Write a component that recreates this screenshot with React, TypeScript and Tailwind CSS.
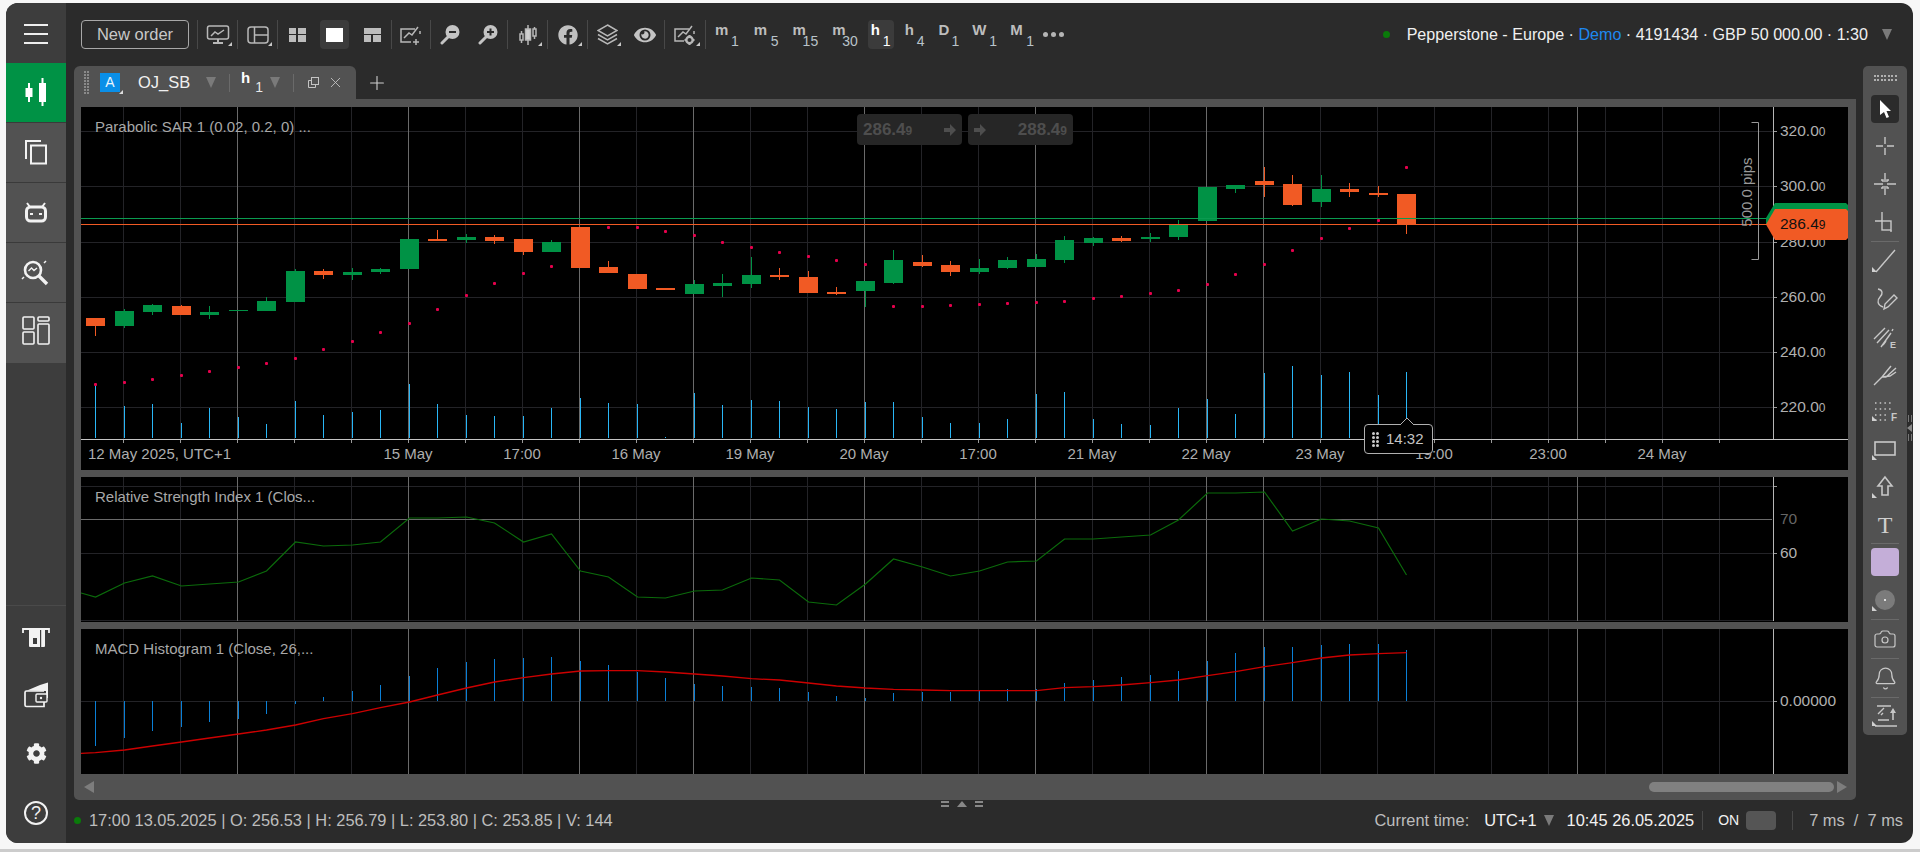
import { useMemo } from 'react'
import { Plus, X, Camera, Bell } from 'lucide-react'
import { FaCog, FaEye, FaFacebook } from 'react-icons/fa'

// candle data: [body top, body bottom, wick high, wick low, up?]
const candles: [number, number, number, number, number][] = [
  [318, 326, 318, 336, 0], [311, 326, 309, 328, 1], [305, 312, 304, 315, 1], [306, 315, 305, 315, 0],
  [312, 315, 306, 319, 1], [310, 311, 310, 311, 1], [301, 311, 297, 311, 1], [271, 302, 269, 302, 1],
  [271, 275, 269, 279, 0], [272, 275, 268, 280, 1], [269, 272, 268, 274, 1], [239, 269, 239, 269, 1],
  [239, 241, 230, 241, 0], [237, 240, 234, 243, 1], [237, 241, 235, 244, 0], [239, 252, 239, 255, 0],
  [242, 252, 240, 252, 1], [227, 268, 227, 268, 0], [267, 273, 261, 273, 0], [274, 289, 274, 289, 0],
  [288, 290, 288, 290, 0], [284, 294, 280, 294, 1], [283, 286, 274, 297, 1], [275, 284, 257, 288, 1],
  [275, 277, 268, 280, 0], [277, 293, 271, 293, 0], [292, 294, 287, 295, 0], [281, 291, 281, 307, 1],
  [260, 283, 250, 284, 1], [262, 266, 255, 267, 0], [265, 272, 261, 276, 0], [268, 272, 259, 274, 1],
  [260, 268, 257, 269, 1], [259, 267, 254, 267, 1], [240, 260, 236, 263, 1], [238, 243, 237, 246, 1],
  [238, 241, 236, 242, 0], [237, 239, 233, 242, 1], [225, 237, 220, 240, 1], [187, 221, 187, 221, 1],
  [185, 189, 185, 193, 1], [181, 185, 167, 197, 0], [184, 205, 175, 206, 0], [189, 202, 175, 207, 1],
  [189, 192, 183, 197, 0], [193, 195, 186, 197, 0], [194, 224, 194, 234, 0],
]
const sar = [384, 382, 379, 375, 371, 367, 363, 358, 349, 341, 332, 323, 309, 295, 283, 273, 266, 230, 227, 227, 231, 235, 242, 247, 252, 256, 260, 264, 306, 306, 305, 304, 303, 302, 301, 298, 296, 293, 290, 284, 274, 264, 250, 238, 228, 220, 167]
const volume = [384, 406, 404, 423, 408, 417, 424, 401, 415, 412, 410, 384, 404, 415, 416, 416, 408, 398, 403, 404, 437, 393, 405, 400, 401, 407, 409, 402, 402, 417, 423, 423, 419, 394, 392, 419, 424, 425, 408, 399, 414, 373, 366, 375, 372, 395, 372]
const rsi = [597, 583, 576, 586, 584, 582, 571, 542, 546, 545, 542, 518, 518, 517, 523, 542, 534, 571, 577, 597, 598, 591, 590, 578, 580, 602, 605, 584, 559, 567, 576, 571, 562, 561, 539, 539, 537, 535, 520, 493, 493, 492, 531, 519, 521, 528, 575]
const hist = [746, 738, 731, 727, 722, 719, 714, 704, 697, 691, 685, 676, 668, 662, 659, 658, 657, 661, 665, 672, 678, 684, 686, 687, 688, 692, 696, 698, 693, 692, 692, 691, 689, 689, 683, 680, 677, 675, 671, 661, 653, 647, 647, 645, 644, 644, 650]
const macd = [752.7, 750, 746, 742, 738, 734, 730, 725, 718.7, 713.7, 707.7, 702, 695, 688, 682, 677.7, 674, 671, 670.7, 670.7, 672, 674, 676, 678.7, 680, 683, 686, 688, 689.3, 690, 690.7, 690.7, 690.7, 690.7, 687.7, 686.7, 685, 682.7, 680, 675.7, 671.7, 666.7, 662.7, 658, 655, 653.7, 652.7]

const cx = (i: number) => Math.round(95.3 + 28.5 * i)
const gridX = Array.from({ length: 29 }, (_, i) => 123 + 57 * i)
const bright = [237, 408, 579, 693, 864, 1035, 1206, 1263, 1577]
const timeLabels: [string, number][] = [['15 May', 408], ['17:00', 522], ['16 May', 636], ['19 May', 750], ['20 May', 864], ['17:00', 978], ['21 May', 1092], ['22 May', 1206], ['23 May', 1320], ['19:00', 1434], ['23:00', 1548], ['24 May', 1662]]
const prices: [string, number][] = [['320.0', 131], ['300.0', 186], ['280.0', 242], ['260.0', 297], ['240.0', 352], ['220.0', 407]]

const GREEN = '#009245'
const ORANGE = '#f15a24'

function VGrid({ top, bottom }: { top: number; bottom: number }) {
  return (
    <>
      {gridX.map((x) => (
        <rect key={x} x={x} y={top} width={1} height={bottom - top} fill="#232327" />
      ))}
      {bright.map((x) => (
        <rect key={x} x={x} y={top} width={1} height={bottom - top} fill="#6a6a6a" />
      ))}
      <rect x={1773} y={top} width={1} height={bottom - top} fill="#b5b5b5" />
    </>
  )
}

function PricePane() {
  return (
    <svg width={1767} height={363} viewBox="81 107 1767 363" className="block">
      <rect x={81} y={107} width={1767} height={363} fill="#000" />
      {[131, 186, 242, 297, 352, 407].map((y) => (
        <rect key={y} x={81} y={y} width={1692} height={1} fill="#232327" />
      ))}
      <VGrid top={107} bottom={439} />
      <rect x={81} y={439} width={1767} height={1} fill="#c4c4c4" />
      {gridX.map((x) => (
        <rect key={x} x={x} y={440} width={1} height={3} fill="#999" />
      ))}
      {volume.map((y, i) => (
        <rect key={i} x={cx(i)} y={y} width={1} height={438 - y} fill="#29b6f6" />
      ))}
      {sar.map((y, i) => (
        <rect key={i} x={cx(i) - 1} y={y - 1} width={3} height={3} rx={1} fill="#e6004c" />
      ))}
      {candles.map(([t, b, h, l, up], i) => (
        <g key={i} fill={up ? GREEN : ORANGE}>
          <rect x={cx(i)} y={h} width={1} height={l - h} />
          <rect x={cx(i) - 9} y={t} width={19} height={b - t} />
        </g>
      ))}
      <rect x={81} y={218} width={1686} height={1} fill="#0a9b50" />
      <rect x={81} y={224} width={1686} height={1} fill="#f15a24" />
      <g stroke="#999" fill="none">
        <path d="M1751.5 122.5H1758.5V259.5H1751.5" />
      </g>
      <text x={1746} y={192} textAnchor="middle" dominantBaseline="central" transform="rotate(-90 1746 192)" fontSize={15} fill="#9a9a9a">
        500.0 pips
      </text>
      {prices.map(([p, y]) => (
        <g key={y}>
          <rect x={1774} y={y} width={3} height={1} fill="#999" />
          <text x={1780} y={y + 4.5} fontSize={15.5} fill="#b0b0b0">
            {p}
            <tspan fontSize={12}>0</tspan>
          </text>
        </g>
      ))}
      <polygon points="1766,218 1775,203 1846,203 1848,205 1848,224 1766,224" fill={GREEN} />
      <polygon points="1766,224.5 1775,209 1846,209 1848,211 1848,238 1846,240 1775,240" fill={ORANGE} />
      <text x={1780} y={228.5} fontSize={15.5} fill="#111">
        286.4<tspan fontSize={12}>9</tspan>
      </text>
      <text x={88} y={459} fontSize={15} fill="#aeaeae">
        12 May 2025, UTC+1
      </text>
      {timeLabels.map(([t, x]) => (
        <text key={x} x={x} y={459} fontSize={15} textAnchor="middle" fill="#aeaeae">
          {t}
        </text>
      ))}
    </svg>
  )
}

function RsiPane() {
  const line = useMemo(() => '81,593 ' + rsi.map((y, i) => `${cx(i) + 0.5},${y}`).join(' '), [])
  return (
    <svg width={1767} height={145} viewBox="81 477 1767 145" className="block">
      <rect x={81} y={477} width={1767} height={145} fill="#000" />
      {[486, 553, 620].map((y) => (
        <rect key={y} x={81} y={y} width={1692} height={1} fill="#232327" />
      ))}
      <VGrid top={477} bottom={621} />
      <rect x={81} y={519} width={1691} height={1} fill="#6a6a6a" />
      <polyline points={line} fill="none" stroke="#0b6b0b" strokeWidth={1.2} />
      {[486, 553].map((y) => (
        <rect key={y} x={1774} y={y} width={3} height={1} fill="#999" />
      ))}
      <text x={1780} y={524} fontSize={15.5} fill="#666">
        70
      </text>
      <text x={1780} y={557.5} fontSize={15.5} fill="#b0b0b0">
        60
      </text>
    </svg>
  )
}

function MacdPane() {
  const line = useMemo(() => '81,753.3 ' + macd.map((y, i) => `${cx(i) + 0.5},${y}`).join(' '), [])
  return (
    <svg width={1767} height={145} viewBox="81 629 1767 145" className="block">
      <rect x={81} y={629} width={1767} height={145} fill="#000" />
      <rect x={81} y={701} width={1692} height={1} fill="#232327" />
      <VGrid top={629} bottom={774} />
      {hist.map((y, i) => (
        <rect key={i} x={cx(i)} y={Math.min(y, 701)} width={1} height={Math.abs(701 - y)} fill="#0a7fd6" />
      ))}
      <polyline points={line} fill="none" stroke="#cc0000" strokeWidth={1.3} />
      <rect x={1774} y={701} width={3} height={1} fill="#999" />
      <text x={1780} y={705.5} fontSize={15.5} fill="#b0b0b0">
        0.00000
      </text>
    </svg>
  )
}

function Caret({ className = '' }: { className?: string }) {
  return (
    <svg width={10} height={11} viewBox="0 0 10 11" className={className}>
      <polygon points="0,0 10,0 5,11" fill="#7a7a7a" />
    </svg>
  )
}

function Sep() {
  return <div className="w-px h-[29px] bg-[#484848] shrink-0" />
}

function Corner() {
  return (
    <svg width={4} height={4} viewBox="0 0 4 4" className="absolute right-[5px] bottom-[3px]">
      <polygon points="4,0 4,4 0,4" fill="#c8c8c8" />
    </svg>
  )
}

function Slot({ w, corner, active, children }: { w: string; corner?: boolean; active?: boolean; children: React.ReactNode }) {
  return (
    <div className={`relative h-[29px] flex items-center justify-center shrink-0 ${w}`}>
      {active && <div className="absolute inset-y-0 left-[4px] right-[4px] rounded bg-[#3b3b3b]" />}
      <div className="relative flex">{children}</div>
      {corner && <Corner />}
    </div>
  )
}

const ic = { fill: 'none', stroke: '#b8b8b8', strokeWidth: 1.5 }

function TopIcons() {
  return (
    <>
      <Sep />
      <Slot w="w-[39px]" corner>
        <svg width={24} height={20} viewBox="0 0 24 20" {...ic}>
          <rect x={1.5} y={1} width={21} height={13} rx={2} />
          <path d="M5 11l4-4 3 2 6-4" />
          <path d="M12 14v3M7 18h10" strokeWidth={2} />
        </svg>
      </Slot>
      <Sep />
      <Slot w="w-[39px]" corner>
        <svg width={22} height={18} viewBox="0 0 22 18" {...ic}>
          <rect x={1} y={1} width={20} height={16} rx={3} />
          <path d="M7.5 1v16M7.5 9H21" />
        </svg>
      </Slot>
      <Sep />
      <Slot w="w-[38px]">
        <div className="grid grid-cols-2 gap-[1.5px] w-[17px] h-[14px]">
          <div className="bg-[#bdbdbd]" />
          <div className="bg-[#bdbdbd]" />
          <div className="bg-[#bdbdbd]" />
          <div className="bg-[#bdbdbd]" />
        </div>
      </Slot>
      <Slot w="w-[37px]" active>
        <div className="w-[17px] h-[14px] bg-white" />
      </Slot>
      <Slot w="w-[38px]">
        <div className="grid grid-cols-2 gap-[1.5px] w-[17px] h-[14px]">
          <div className="col-span-2 bg-[#bdbdbd]" />
          <div className="bg-[#bdbdbd]" />
          <div className="bg-[#bdbdbd]" />
        </div>
      </Slot>
      <Sep />
      <Slot w="w-[38px]">
        <svg width={22} height={22} viewBox="0 0 22 22" {...ic}>
          <path d="M15 5H1v13h10" />
          <path d="M4 14l5-5 3 2 6-8" />
          <path d="M20 7v3M16 15v6M13 18h6" />
        </svg>
      </Slot>
      <Sep />
      <Slot w="w-[38px]">
        <svg width={20} height={20} viewBox="0 0 20 20">
          <circle cx={12.5} cy={7} r={7} fill="#c4c4c4" />
          <path d="M9 7h7" stroke="#2b2b2b" strokeWidth={2} />
          <path d="M8 12l-6 6" stroke="#c4c4c4" strokeWidth={3} strokeLinecap="round" />
        </svg>
      </Slot>
      <Slot w="w-[38px]">
        <svg width={20} height={20} viewBox="0 0 20 20">
          <circle cx={12.5} cy={7} r={7} fill="#c4c4c4" />
          <path d="M9 7h7M12.5 3.5v7" stroke="#2b2b2b" strokeWidth={2} />
          <path d="M8 12l-6 6" stroke="#c4c4c4" strokeWidth={3} strokeLinecap="round" />
        </svg>
      </Slot>
      <Sep />
      <Slot w="w-[39px]" corner>
        <svg width={18} height={22} viewBox="0 0 18 22" {...ic}>
          <path d="M2.5 7v12M9 1v20M15.5 3v12" />
          <rect x={1} y={10} width={3} height={6} fill="#2b2b2b" />
          <rect x={6.5} y={5} width={5} height={11} fill="#d0d0d0" />
          <rect x={14} y={5} width={3} height={7} fill="#2b2b2b" />
        </svg>
      </Slot>
      <Sep />
      <Slot w="w-[39px]" corner>
        <FaFacebook size={20} color="#c0c0c0" />
      </Slot>
      <Sep />
      <Slot w="w-[38px]" corner>
        <svg width={21} height={21} viewBox="0 0 21 21" {...ic}>
          <path d="M10.5 1L20 6.5l-9.5 5.5L1 6.5z" />
          <path d="M1 10.5l9.5 5.5 9.5-5.5M1 14.5l9.5 5.5 9.5-5.5" />
        </svg>
      </Slot>
      <Slot w="w-[38px]">
        <FaEye size={22} color="#c4c4c4" />
      </Slot>
      <Sep />
      <Slot w="w-[40px]" corner>
        <svg width={22} height={22} viewBox="0 0 22 22" {...ic}>
          <path d="M15 5H1v12h9" />
          <path d="M4 13l5-5 3 2 6-8" />
          <path d="M20 7v3" />
          <circle cx={15.5} cy={16} r={3.2} strokeWidth={2.4} />
          <path d="M15.5 11v1.5M15.5 19.5V21M10.5 16H12M19 16h1.5" strokeWidth={2} />
        </svg>
      </Slot>
      <Sep />
    </>
  )
}

const frames = [
  { l: 'm', s: '1', c: 'ml-[9px]', g: 'ml-[3px]', wl: 'w-[13px]' },
  { l: 'm', s: '5', c: 'ml-[15px]', g: 'ml-[4px]', wl: 'w-[13px]' },
  { l: 'm', s: '15', c: 'ml-[14px]', g: 'ml-[-3px]', wl: 'w-[13px]' },
  { l: 'm', s: '30', c: 'ml-[14px]', g: 'ml-[-3px]', wl: 'w-[13px]' },
]

function TimeFrame({ l, s, cls, gap, wl }: { l: string; s: string; cls: string; gap: string; wl: string }) {
  return (
    <div className={`flex shrink-0 h-[29px] ${cls}`}>
      <span className={`text-[15px] font-bold leading-[20px] text-[#bdbdbd] ${wl}`}>{l}</span>
      <span className={`text-[14px] leading-[15px] mt-[14px] text-[#b9c3ca] ${gap}`}>{s}</span>
    </div>
  )
}

function TimeFrames() {
  return (
    <>
      {frames.map((f) => (
        <TimeFrame key={f.s} l={f.l} s={f.s} cls={f.c} gap={f.g} wl={f.wl} />
      ))}
      <div className="ml-[10px] w-[26px] h-[29px] shrink-0 rounded bg-[#3b3b3b] flex pl-[3px]">
        <span className="text-[15px] font-bold leading-[20px] text-white w-[9px]">h</span>
        <span className="text-[14px] leading-[15px] mt-[14px] ml-[3px] text-white">1</span>
      </div>
      <TimeFrame l="h" s="4" cls="ml-[11px]" gap="ml-[3px]" wl="w-[9px]" />
      <TimeFrame l="D" s="1" cls="ml-[14px]" gap="ml-[3px]" wl="w-[10px]" />
      <TimeFrame l="W" s="1" cls="ml-[13px]" gap="ml-[3px]" wl="w-[14px]" />
      <TimeFrame l="M" s="1" cls="ml-[13px]" gap="ml-[4px]" wl="w-[12px]" />
      <div className="ml-[9px] flex gap-[3px] items-center h-[29px] shrink-0">
        <div className="w-[5px] h-[5px] rounded-full bg-[#b5b5b5]" />
        <div className="w-[5px] h-[5px] rounded-full bg-[#b5b5b5]" />
        <div className="w-[5px] h-[5px] rounded-full bg-[#b5b5b5]" />
      </div>
    </>
  )
}

function SideItem({ active, children }: { active?: boolean; children: React.ReactNode }) {
  return <div className={`h-[60px] border-b border-[#3a3a3a] ${active ? 'bg-[#009245]' : 'bg-[#525252]'}`}>{children}</div>
}

const s60 = { width: 60, height: 59, viewBox: '0 0 60 59', fill: 'none', stroke: '#f2f2f2', strokeWidth: 2 }

function Sidebar() {
  return (
    <div className="w-[60px] shrink-0 h-full bg-[#3d3d3d] flex flex-col">
      <div className="h-[60px] flex flex-col items-center justify-start pt-[21px] gap-[7px]">
        <div className="w-[24px] h-[2px] bg-[#eee]" />
        <div className="w-[24px] h-[2px] bg-[#eee]" />
        <div className="w-[24px] h-[2px] bg-[#eee]" />
      </div>
      <SideItem active>
        <svg {...s60}>
          <path d="M23 20v19M36.5 15v28" stroke="#fff" />
          <rect x={19.5} y={25} width={7} height={9} fill="#fff" stroke="none" />
          <rect x={33} y={20} width={7} height={19} fill="#fff" stroke="none" />
        </svg>
      </SideItem>
      <SideItem>
        <svg {...s60}>
          <path d="M20 36V18h15" />
          <rect x={25} y={22.5} width={15} height={18} />
        </svg>
      </SideItem>
      <SideItem>
        <svg {...s60}>
          <rect x={20.5} y={24} width={19} height={14} rx={4} strokeWidth={3} />
          <path d="M21 20l3 4M39 20l-3 4" />
          <path d="M24 31h3M33 31h3" strokeWidth={2} />
        </svg>
      </SideItem>
      <SideItem>
        <svg {...s60}>
          <circle cx={27} cy={27} r={8} strokeWidth={2.6} />
          <path d="M33 33l8 8" strokeWidth={3.4} />
          <path d="M22.5 28l3-3 2.5 2.5 3-2.5" strokeWidth={1.4} />
          <path d="M16 36l2-2M38 20l2-2" strokeWidth={1.5} />
        </svg>
      </SideItem>
      <div className="h-[60px] bg-[#525252]">
        <svg {...s60} strokeWidth={1.6}>
          <rect x={17} y={14} width={11} height={12} rx={1} />
          <rect x={17} y={29} width={11} height={12} rx={1} />
          <rect x={32} y={14} width={11} height={4} rx={1} />
          <rect x={32} y={21} width={11} height={20} rx={1} />
        </svg>
      </div>
      <div className="mt-auto border-t border-[#4a4a4a] pt-[4px] flex flex-col items-center">
        <div className="h-[56px] flex items-center justify-center">
          <svg width={30} height={22} viewBox="0 0 30 22">
            <path d="M2 6V2h26v4" fill="none" stroke="#f2f2f2" strokeWidth={1.8} />
            <path d="M8 3h16v16a1 1 0 01-1 1H9a1 1 0 01-1-1z" fill="#f2f2f2" />
            <rect x={12} y={11} width={4} height={6} fill="#3d3d3d" />
            <rect x={19} y={3} width={1.2} height={17} fill="#3d3d3d" />
          </svg>
        </div>
        <div className="h-[56px] flex items-center justify-center">
          <svg width={25} height={27} viewBox="0 0 25 27" fill="none" stroke="#f2f2f2" strokeWidth={1.7}>
            <path d="M20 10H2.5a1.5 1.5 0 00-1.5 1.5V24a1.5 1.5 0 001.5 1.5H20V21" />
            <path d="M3 9.5L16 4l8-2.5V17l-2 0V10" fill="#f2f2f2" stroke="none" />
            <rect x={12} y={13} width={11} height={8} rx={1} strokeWidth={1.4} fill="#3d3d3d" />
            <circle cx={17} cy={17} r={1.2} fill="#f2f2f2" stroke="none" />
          </svg>
        </div>
        <div className="h-[60px] mt-[1px] flex items-center justify-center">
          <FaCog size={21} color="#f2f2f2" />
        </div>
        <div className="h-[60px] flex items-center justify-center">
          <div className="w-[24px] h-[24px] rounded-full border-2 border-[#f2f2f2] text-[#f2f2f2] text-[18px] leading-[20px] text-center">?</div>
        </div>
      </div>
    </div>
  )
}

const t28 = { width: 28, height: 28, viewBox: '0 0 28 28', fill: 'none', stroke: '#c8c8c8', strokeWidth: 1.4 }

function ToolRow({ h, corner, children }: { h: string; corner?: boolean; children: React.ReactNode }) {
  return (
    <div className={`relative flex items-center justify-center w-full shrink-0 ${h}`}>
      {children}
      {corner && (
        <svg width={5} height={5} viewBox="0 0 5 5" className="absolute left-[9px] bottom-[8px]">
          <polygon points="0,0 0,5 5,5" fill="#d0d0d0" />
        </svg>
      )}
    </div>
  )
}

function ToolSep() {
  return <div className="w-[28px] h-px bg-[#6a6a6a] shrink-0" />
}

function RightTools() {
  return (
    <div className="w-[44px] h-[669px] shrink-0 ml-[7px] bg-[#525252] rounded-[5px] flex flex-col items-center">
      <div className="h-[29px] shrink-0 flex items-center">
        <div className="grid grid-cols-7 gap-[1.5px] mt-[-5px]">
          {Array.from({ length: 14 }, (_, i) => (
            <div key={i} className="w-[2px] h-[2px] bg-[#b0b0b0]" />
          ))}
        </div>
      </div>
      <div className="w-[28px] h-[28px] shrink-0 rounded bg-[#2b2b2b] flex items-center justify-center">
        <svg width={14} height={20} viewBox="0 0 14 20">
          <path d="M2 1l11 11H8.5l2.5 6-2.5 1-2.5-6L2 16z" fill="#fff" />
        </svg>
      </div>
      <ToolRow h="h-[42px] mt-[2px]">
        <svg {...t28}>
          <path d="M14 5v7M14 16v7M5 14h7M16 14h7" />
        </svg>
      </ToolRow>
      <ToolRow h="h-[34px]">
        <svg {...t28}>
          <path d="M14 3v9M14 16v9M3 14h9M16 14h9M10 10h2v2M18 10h-2v2M10 18h2v-2M18 18h-2v-2" />
        </svg>
      </ToolRow>
      <ToolRow h="h-[40px]">
        <svg {...t28}>
          <rect x={11} y={14} width={9} height={9} />
          <path d="M11 5v9M4 14h7M20 23v2" />
        </svg>
      </ToolRow>
      <ToolSep />
      <ToolRow h="h-[38px]" corner>
        <svg {...t28}>
          <path d="M24 3L5 25" />
        </svg>
      </ToolRow>
      <ToolRow h="h-[37px]">
        <svg {...t28}>
          <path d="M7 4c5 1 5 5 2 8s-3 8 3 10" />
          <path d="M13 24l1-5 9-9 3 3-9 9z" />
        </svg>
      </ToolRow>
      <ToolRow h="h-[39px]">
        <svg {...t28}>
          <path d="M3 16L14 5M6 20L18 7M10 24l10-14M12 22l3-4M21 8l1-2" />
          <text x={19} y={25} fontSize={9} fontWeight={700} fill="#c8c8c8" stroke="none">E</text>
        </svg>
      </ToolRow>
      <ToolRow h="h-[36px]">
        <svg {...t28}>
          <path d="M3 25l8-8M11 17L20 6M11 17h4l10-9M11 17l8-1 6-4" />
        </svg>
      </ToolRow>
      <ToolRow h="h-[37px]" corner>
        <svg {...t28}>
          <path d="M4 6h18M4 12h18M4 18h14M4 23h14" strokeDasharray="1.5 3.2" />
          <text x={20} y={24} fontSize={10} fontWeight={700} fill="#c8c8c8" stroke="none">F</text>
        </svg>
      </ToolRow>
      <ToolRow h="h-[39px]" corner>
        <svg {...t28} strokeWidth={1.6}>
          <rect x={4} y={7} width={20} height={13} />
        </svg>
      </ToolRow>
      <ToolRow h="h-[38px]" corner>
        <svg {...t28} strokeWidth={1.6}>
          <path d="M14 4L7 13h4v9h6v-9h4z" />
        </svg>
      </ToolRow>
      <ToolRow h="h-[37px]">
        <span className="font-['Liberation_Serif',serif] text-[24px] leading-none text-[#cfcfcf]">T</span>
      </ToolRow>
      <ToolSep />
      <div className="w-[28px] h-[28px] mt-[4px] shrink-0 rounded bg-[#c4aed8]" />
      <ToolRow h="h-[39px] mt-[4px]" corner>
        <div className="w-[20px] h-[20px] rounded-full bg-[#7b7b7b] flex items-center justify-center">
          <div className="w-[2px] h-[2px] rounded-full bg-white" />
        </div>
      </ToolRow>
      <ToolSep />
      <ToolRow h="h-[38px]">
        <Camera size={24} strokeWidth={1.2} color="#c8c8c8" />
      </ToolRow>
      <ToolSep />
      <ToolRow h="h-[38px]">
        <Bell size={25} strokeWidth={1.2} color="#c8c8c8" />
      </ToolRow>
      <ToolSep />
      <ToolRow h="h-[36px]" corner>
        <svg {...t28}>
          <path d="M6 4h14M7 12l6-6M10 13l2-2M7 18h11M4 24h22" />
          <path d="M22 18v-7" strokeWidth={1.6} />
          <polygon points="22,6 25,11 19,11" fill="#c8c8c8" stroke="none" />
        </svg>
      </ToolRow>
    </div>
  )
}

function Tabs() {
  return (
    <div className="h-[33px] flex items-center shrink-0">
      <div className="w-[282px] h-[33px] rounded-t-[6px] bg-[#525252] flex items-center">
        <div className="ml-[10px] grid grid-cols-2 gap-[1px]">
          {Array.from({ length: 16 }, (_, i) => (
            <div key={i} className="w-[2px] h-[2px] bg-[#8a8a8a]" />
          ))}
        </div>
        <div className="relative ml-[11px] w-[20px] h-[19px] bg-[#0a8fe8] text-[#eaf6ff] text-[14px] leading-[19px] text-center">
          A
          <svg width={4} height={4} viewBox="0 0 4 4" className="absolute right-[-3px] bottom-[-2px]">
            <polygon points="4,0 4,4 0,4" fill="#ddd" />
          </svg>
        </div>
        <span className="ml-[18px] w-[60px] text-[16.5px] text-[#f0f0f0] leading-none">OJ_SB</span>
        <Caret className="ml-[8px]" />
        <div className="ml-[13px] w-px h-[18px] bg-[#6a6a6a]" />
        <div className="ml-[11px] w-[26px] flex">
          <span className="text-[15px] font-bold text-white leading-[18px] mt-[-3px]">h</span>
          <span className="text-[14px] text-[#e8e8e8] leading-[14px] mt-[8px] ml-[5px]">1</span>
        </div>
        <Caret className="ml-[3px]" />
        <div className="ml-[13px] w-px h-[18px] bg-[#6a6a6a]" />
        <svg width={13} height={13} viewBox="0 0 13 13" fill="none" stroke="#c4c4c4" className="ml-[13px]">
          <rect x={4.5} y={1.5} width={7} height={7} />
          <path d="M4.5 4.5h-3v7h7v-3" />
        </svg>
        <X size={17} strokeWidth={1.2} color="#c8c8c8" className="ml-[7px]" />
      </div>
      <Plus size={22} strokeWidth={1.2} color="#d0d0d0" className="ml-[10px]" />
    </div>
  )
}

function OverlayBtn({ price, reverse }: { price: string; reverse?: boolean }) {
  return (
    <div className={`w-[105px] h-[31px] rounded bg-[#262626] px-[6px] flex items-center justify-between text-[17px] font-bold text-[#4e4e4e] ${reverse ? 'flex-row-reverse' : ''}`}>
      <span>
        {price}
        <span className="text-[12px]">9</span>
      </span>
      <svg width={12} height={12} viewBox="0 0 12 12">
        <path d="M0 4h6V0l6 6-6 6V8H0z" fill="#4e4e4e" />
      </svg>
    </div>
  )
}

function ChartPanel() {
  return (
    <div className="relative h-[701px] shrink-0 rounded-b-[5px] bg-[#525252] pl-[7px] pt-[8px]">
      <div className="relative w-[1767px]">
        <PricePane />
        <div className="absolute left-[14px] top-[11px] text-[15px] leading-[18px] text-[#a8a8a8]">Parabolic SAR 1 (0.02, 0.2, 0) ...</div>
        <div className="absolute left-[776px] top-[7px] flex gap-[6px]">
          <OverlayBtn price="286.4" />
          <OverlayBtn price="288.4" reverse />
        </div>
        {/* 14:32 countdown bubble */}
        <div className="absolute left-[1283px] top-[317px] w-[69px] h-[30px] rounded-[4px] border border-[#b0b0b0] bg-black flex items-center pl-[7px] gap-[7px]">
          <div className="grid grid-cols-2 gap-[1px]">
            {Array.from({ length: 8 }, (_, i) => (
              <div key={i} className="w-[3px] h-[3px] rounded-full bg-[#ccc]" />
            ))}
          </div>
          <span className="text-[15px] text-[#c4c4c4]">14:32</span>
          <svg width={14} height={8} viewBox="0 0 14 8" className="absolute left-[35px] top-[-8px]">
            <path d="M0 8L7 1l7 7" fill="#000" stroke="#b0b0b0" />
          </svg>
        </div>
      </div>
      <div className="relative w-[1767px] mt-[7px]">
        <RsiPane />
        <div className="absolute left-[14px] top-[11px] text-[15px] leading-[18px] text-[#a8a8a8]">Relative Strength Index 1 (Clos...</div>
      </div>
      <div className="relative w-[1767px] mt-[7px]">
        <MacdPane />
        <div className="absolute left-[14px] top-[11px] text-[15px] leading-[18px] text-[#a8a8a8]">MACD Histogram 1 (Close, 26,...</div>
      </div>
      <div className="h-[26px] flex items-center">
        <svg width={10} height={12} viewBox="0 0 10 12" className="ml-[3px]">
          <polygon points="10,0 10,12 0,6" fill="#7d7d7d" />
        </svg>
        <div className="ml-auto w-[185px] h-[10px] rounded-full bg-[#808080]" />
        <svg width={10} height={12} viewBox="0 0 10 12" className="ml-[3px] mr-[9px]">
          <polygon points="0,0 0,12 10,6" fill="#7d7d7d" />
        </svg>
      </div>
    </div>
  )
}

function StatusBar() {
  return (
    <div className="relative h-[43px] ml-[8px] flex items-center text-[16.4px] text-[#bdbdbd] shrink-0 pb-[2px]">
      <div className="absolute left-[867px] top-[1px] flex items-center gap-[8px]">
        <svg width={8} height={6} viewBox="0 0 8 6"><path d="M0 0h8v2H0zM0 4h8v2H0z" fill="#888" /></svg>
        <svg width={10} height={6} viewBox="0 0 10 6"><polygon points="5,0 10,6 0,6" fill="#888" /></svg>
        <svg width={8} height={6} viewBox="0 0 8 6"><path d="M0 0h8v2H0zM0 4h8v2H0z" fill="#888" /></svg>
      </div>
      <div className="w-[7px] h-[7px] rounded-full bg-[#0a7a0a]" />
      <span className="ml-[8px]">17:00 13.05.2025 | O: 256.53 | H: 256.79 | L: 253.80 | C: 253.85 | V: 144</span>
      <span className="ml-auto">Current time:</span>
      <span className="ml-[15px] text-[#f2f2f2]">UTC+1</span>
      <Caret className="ml-[7px]" />
      <span className="ml-[13px] text-[#f2f2f2]">10:45 26.05.2025</span>
      <div className="ml-[8px] w-px h-[19px] bg-[#484848]" />
      <span className="ml-[15px] text-[14px] text-[#f2f2f2]">ON</span>
      <div className="ml-[7px] w-[30px] h-[19px] rounded bg-[#555]" />
      <div className="ml-[16px] w-px h-[19px] bg-[#484848]" />
      <span className="ml-[16px] mr-[10px]">7 ms&nbsp; /&nbsp; 7 ms</span>
    </div>
  )
}

export default function App() {
  return (
    <div className="w-[1920px] h-[852px] overflow-hidden bg-[#f7f7f7] font-['Liberation_Sans',Arial,sans-serif]">
      <div className="h-[3px]" />
      <div className="relative ml-[6px] w-[1907px] h-[840px] rounded-[12px] overflow-hidden bg-[#2b2b2b] flex">
        <Sidebar />
        <div className="flex-1 flex flex-col min-w-0">
          <div className="h-[63px] flex items-start pt-[17px] pl-[15px] shrink-0">
            <button className="w-[108px] h-[29px] rounded-[4px] border border-[#a8a8a8] text-[16.5px] text-[#c8c8c8] shrink-0">New order</button>
            <div className="ml-[8px] flex items-center shrink-0">
              <TopIcons />
              <TimeFrames />
            </div>
            <div className="ml-auto mr-[21px] h-[29px] flex items-center text-[16.1px] text-[#f0f0f0]">
              <div className="w-[7px] h-[7px] rounded-full bg-[#0a7a0a] mr-[17px]" />
              <span>
                Pepperstone - Europe · <span className="text-[#1e88f0]">Demo</span> · 4191434 · GBP 50 000.00 · 1:30
              </span>
              <Caret className="ml-[14px]" />
            </div>
          </div>
          <div className="h-[734px] flex pl-[8px] shrink-0">
            <div className="w-[1782px] flex flex-col shrink-0">
              <Tabs />
              <ChartPanel />
            </div>
            <RightTools />
          </div>
          <StatusBar />
        </div>
        {/* collapse handle */}
        <div className="absolute right-[1px] top-[412px] flex flex-col items-center gap-[2px]">
          <div className="w-[4px] h-[7px] border-x border-[#777]" />
          <svg width={5} height={8} viewBox="0 0 5 8"><polygon points="5,0 5,8 0,4" fill="#888" /></svg>
          <div className="w-[4px] h-[7px] border-x border-[#777]" />
        </div>
      </div>
      <div className="mt-[6px] h-[3px] bg-[#cccccc]" />
    </div>
  )
}
